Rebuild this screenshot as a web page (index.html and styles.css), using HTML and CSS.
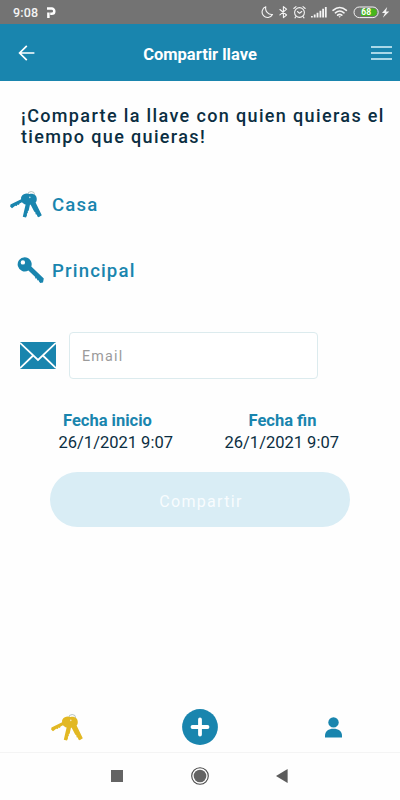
FILE: index.html
```html
<!DOCTYPE html>
<html lang="es">
<head>
  <meta charset="UTF-8">
  <meta name="viewport" content="width=device-width, initial-scale=1">
  <title>Compartir llave</title>
  <link rel="stylesheet" href="styles.css">
</head>
<body>
  <svg width="0" height="0" class="sprite">
    <symbol id="keys" viewBox="0 0 32 27">
      <circle cx="21.2" cy="4" r="3.5" fill="none" stroke="#8aa09a" stroke-width="0.6"/>
      <path fill="currentColor" d="M11.6 5.2C13.2 2.4 17 1.9 19.4 3C23 2.2 26.4 4 26.7 7.2C26.9 9.2 26.6 10.7 25.6 11.6L31.8 24.2L28.7 26.2L27.2 25.3L27 23.8L25.6 23.2L25.4 21.6L24.2 20.6L20.8 14L20 13.4L18.7 19.5L17.7 20.4L17.9 21.7L16.9 22.8L17 24.2L16 26.6L12.8 25.8L15.6 13.6C14 13.2 12.8 12 12 11.2L9.6 12.6L8.9 13.9L7.7 13.6L6.6 15L5.2 14.8L2 17.3L.1 15.4L.5 13.6L11.1 8.2C10.8 7.2 11 6.2 11.6 5.2Z"/>
      <circle cx="19.8" cy="6.4" r="0.8" fill="#fff" opacity="0.7"/>
    </symbol>
  </svg>

  <div class="status-bar">
    <span class="time">9:08</span>
    <svg class="parking" width="9" height="11" viewBox="0 0 9 11"><path d="M1.4 11V5.5M0 1.6H4.7a2.6 2.6 0 0 1 0 5.2H3.2" fill="none" stroke="#fff" stroke-width="2.5"/></svg>
    <svg class="status-icons" width="134" height="24" viewBox="0 0 134 24">
      <g fill="none" stroke="#f4f4f4" stroke-width="1.1" stroke-linecap="round" stroke-linejoin="round">
        <path d="M4.8 6.8A5.5 5.5 0 1 0 11.5 14.5A6.2 6.2 0 0 1 4.8 6.8Z"/>
        <path d="M18.9 9.5L25.6 15L22.4 17.6V6.6L25.6 9.2L18.9 14.8"/>
        <circle cx="38.5" cy="12.5" r="4.9"/>
        <path d="M36.5 11.5L38.5 13.3L40.8 11.5M32.8 8.5L35 6.6M42 6.6L44.2 8.5M35 16.5L34 17.8M42 16.5L43 17.8"/>
        <path d="M72 10.3Q78.7 4.7 85.4 10.3M74.4 12.8Q78.7 9.2 83 12.8M76.6 15.2Q78.7 13.4 80.8 15.2" stroke-width="1.6"/>
      </g>
      <path d="M50 17.5V16H51.8V17.5ZM52.8 17.5V14.6H54.6V17.5ZM55.6 17.5V12.8H57.4V17.5ZM58.5 17.5V10.8H60.3V17.5ZM61.2 17.5V8.8H63V17.5ZM63.9 17.5V7H65.7V17.5ZM77.5 16.2H79.9L78.7 17.7ZM126.2 6.9L121 12.9H124L121.8 17.8L128.3 11.4H125Z" fill="#f4f4f4"/>
      <rect x="93" y="7" width="24.2" height="10.6" rx="5.3" fill="#737373" stroke="#f4f4f4"/>
      <path d="M100 8.5H112a3.8 3.8 0 0 1 0 7.6H100Z" fill="#47b51b"/>
      <text class="battery" x="105.2" y="15.4" text-anchor="middle">68</text>
    </svg>
  </div>

  <header class="app-bar">
    <svg width="18" height="18" viewBox="0 0 18 18"><path d="M16.4 9H1.8M8.8 1.8L1.6 9L8.8 16.2" fill="none" stroke="#fff" stroke-width="1.7"/></svg>
    <h1>Compartir llave</h1>
    <svg width="21" height="16" viewBox="0 0 21 16"><path d="M0 2H21M0 8H21M0 14H21" stroke="#d9f3fb" stroke-width="1.5"/></svg>
  </header>

  <main class="content">
    <h2>¡Comparte la llave con quien quieras el tiempo que quieras!</h2>

    <div class="key-row house">
      <svg width="32" height="27"><use href="#keys"/></svg>
      <span>Casa</span>
    </div>
    <div class="key-row door">
      <svg width="27" height="27" viewBox="0 0 27 27">
        <path fill="#1985ae" fill-rule="evenodd" d="M7.7 .2a7.1 7.1 0 0 1 6.6 9.4L26.8 21.4L26 25.4L23.3 26L22 24.6L21.9 23.4L20.3 23.2L19.9 21.6L18.4 21.4L18 19.8L11.4 13.4A7.1 7.1 0 1 1 7.7 .2ZM5.9 3.2a2.2 2.2 0 1 0 0 4.4a2.2 2.2 0 0 0 0-4.4Z"/>
      </svg>
      <span>Principal</span>
    </div>

    <div class="email-row">
      <svg width="36" height="27" viewBox="0 0 36 27">
        <path d="M0 0H36V27H0Z" fill="#1985ae"/>
        <path d="M0 .8L18 18L36 .8M0 26.2L13.2 13.5M36 26.2L22.8 13.5" fill="none" stroke="#fff" stroke-width="1.8"/>
      </svg>
      <input type="email" placeholder="Email">
    </div>

    <div class="dates">
      <div class="date start">
        <strong>Fecha inicio</strong>
        <span>26/1/2021 9:07</span>
      </div>
      <div class="date end">
        <strong>Fecha fin</strong>
        <span>26/1/2021 9:07</span>
      </div>
    </div>

    <button class="share" disabled>Compartir</button>
  </main>

  <nav class="tab-bar">
    <svg class="tab-keys" width="32" height="27"><use href="#keys"/></svg>
    <svg class="tab-add" width="36" height="36" viewBox="0 0 36 36"><circle cx="18" cy="18" r="17.9" fill="#1985ae"/><path d="M18 10.5V25.5M10.5 18H25.5" stroke="#fff" stroke-width="3.8" stroke-linecap="round"/></svg>
    <svg class="tab-user" width="17" height="21" viewBox="0 0 17 21"><circle cx="8.5" cy="5.4" r="5.2" fill="#1985ae"/><path d="M0 20.6V18.5C0 14.5 3.5 11.8 8.5 11.8S17 14.5 17 18.5V20.6Z" fill="#1985ae"/></svg>
  </nav>

  <div class="system-nav">
    <svg width="12" height="12"><path d="M0 0H12V12H0Z" fill="#646464"/></svg>
    <svg width="18" height="18" viewBox="0 0 18 18"><circle cx="9" cy="9" r="8.3" fill="none" stroke="#484848" stroke-width="1.1"/><circle cx="9" cy="9" r="6.3" fill="#646464"/></svg>
    <svg width="12" height="14" viewBox="0 0 12 14"><path d="M0 7L11.6 0V14Z" fill="#5c5c5c"/></svg>
  </div>
</body>
</html>
```
FILE: styles.css
```css
* {
  box-sizing: border-box;
}

body {
  margin: 0;
  width: 400px;
  height: 800px;
  display: flex;
  flex-direction: column;
  overflow: hidden;
  background-color: #fefefe;
  color: #0b2e42;
  font-family: Roboto, sans-serif;
}

svg {
  display: block;
  flex: none;
}

.sprite {
  position: absolute;
}

.status-bar {
  height: 24px;
  flex: none;
  display: flex;
  align-items: center;
  padding: 0 5px 0 13px;
  background-color: #737373;
  color: #f4f4f4;
}

.time {
  width: 34px;
  font-size: 12.5px;
  font-weight: 500;
  letter-spacing: 0.2px;
  line-height: 24px;
  padding-top: 1px;
}

.parking {
  margin-top: 1px;
}

.status-icons {
  margin-left: auto;
}

.battery {
  font-size: 8.5px;
  font-weight: 700;
  fill: #fff;
}

.app-bar {
  height: 57px;
  flex: none;
  display: grid;
  grid-template-columns: 1fr auto 1fr;
  align-items: center;
  padding: 0 8px 0 18px;
  background-color: #1985ae;
  color: #fff;
}

.app-bar h1 {
  margin: 3px 10px 0 0;
  font-size: 16.5px;
  font-weight: 700;
}

.app-bar svg:last-child {
  justify-self: end;
}

.content {
  flex: 1;
}

.content h2 {
  margin: 24px 0 0 21px;
  font-size: 18px;
  font-weight: 500;
  letter-spacing: 1.36px;
  line-height: 21px;
}

.key-row {
  height: 28px;
  display: flex;
  align-items: center;
  color: #1985ae;
  font-size: 18.6px;
  font-weight: 500;
  letter-spacing: 1.15px;
}

.key-row span {
  margin-top: 2px;
}

.house {
  margin-top: 43px;
  padding-left: 10px;
  gap: 10px;
}

.door {
  margin-top: 38px;
  padding-left: 17px;
  gap: 8px;
}

.email-row {
  display: flex;
  align-items: center;
  gap: 13px;
  margin-top: 48px;
  padding-left: 20px;
}

.email-row input {
  width: 249px;
  height: 47px;
  padding: 0 12px;
  border: 1px solid #dcebee;
  border-radius: 4px;
  background-color: #fff;
  font-family: inherit;
  font-size: 14.3px;
  letter-spacing: 1.2px;
}

.email-row input::placeholder {
  color: #9b9b9b;
}

.dates {
  display: flex;
  gap: 51px;
  margin: 31px 0 0 58.5px;
}

.date {
  width: 115px;
  display: flex;
  flex-direction: column;
  font-size: 16.5px;
  line-height: 22px;
}

.date strong {
  color: #1985ae;
  font-weight: 700;
}

.start strong {
  padding-left: 4.5px;
}

.end strong {
  padding-left: 24px;
}

.date span {
  white-space: nowrap;
}

.share {
  display: block;
  width: 300px;
  height: 55px;
  margin: 18px auto 0;
  padding: 3px 0 0 2px;
  border: none;
  border-radius: 28px;
  background-color: #d9edf5;
  color: #f8fcfe;
  font-family: inherit;
  font-size: 16px;
  letter-spacing: 1.3px;
}

.tab-bar {
  height: 52px;
  flex: none;
  display: grid;
  grid-template-columns: 1fr auto 1fr;
  align-items: center;
  padding: 2px 58px 0 51px;
}

.tab-keys {
  color: #e2b823;
}

.tab-add {
  margin-left: 7px;
}

.tab-user {
  justify-self: end;
}

.system-nav {
  height: 48px;
  flex: none;
  display: flex;
  align-items: center;
  justify-content: space-between;
  padding: 0 112px 2px 111px;
  border-top: 1px solid #f4f4f4;
}
```
